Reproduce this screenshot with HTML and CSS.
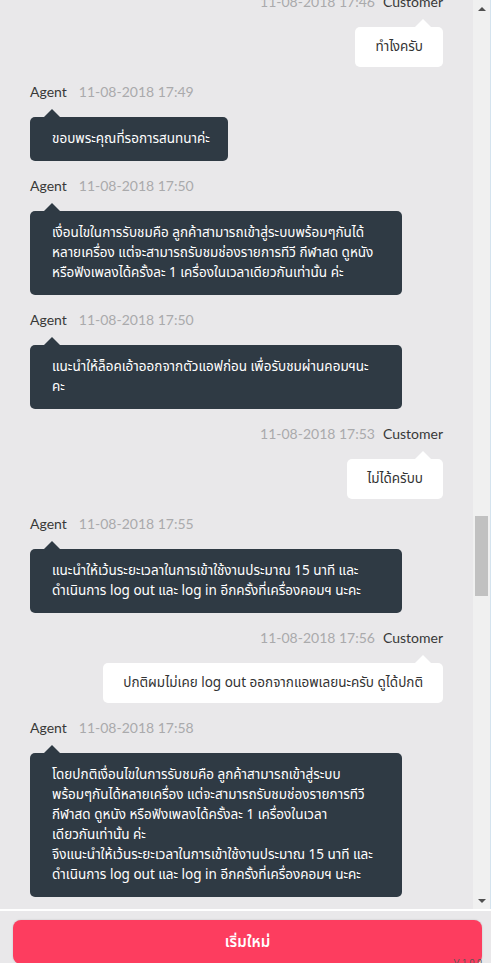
FILE: index.html
```html
<!DOCTYPE html>
<html lang="th">
<head>
<meta charset="utf-8">
<title>Chat</title>
<link rel="stylesheet" href="styles.css">
</head>
<body>
<div class="app">
  <div class="chat-row">
    <div class="messages">
      <div class="list">
        <div class="msg customer">
          <div class="meta"><span class="time">11-08-2018 17:46</span><span class="who">Customer</span></div>
          <div class="bubble">ทำไงครับ</div>
        </div>
        <div class="msg agent">
          <div class="meta"><span class="who">Agent</span><span class="time">11-08-2018 17:49</span></div>
          <div class="bubble">ขอบพระคุณที่รอการสนทนาค่ะ</div>
        </div>
        <div class="msg agent">
          <div class="meta"><span class="who">Agent</span><span class="time">11-08-2018 17:50</span></div>
          <div class="bubble full">เงื่อนไขในการรับชมคือ ลูกค้าสามารถเข้าสู่ระบบพร้อมๆกันได้<br>หลายเครื่อง แต่จะสามารถรับชมช่องรายการทีวี กีฬาสด ดูหนัง<br>หรือฟังเพลงได้ครั้งละ 1 เครื่องในเวลาเดียวกันเท่านั้น ค่ะ</div>
        </div>
        <div class="msg agent">
          <div class="meta"><span class="who">Agent</span><span class="time">11-08-2018 17:50</span></div>
          <div class="bubble full">แนะนำให้ล็อคเอ้าออกจากตัวแอฟก่อน เพื่อรับชมผ่านคอมฯนะ<br>คะ</div>
        </div>
        <div class="msg customer">
          <div class="meta"><span class="time">11-08-2018 17:53</span><span class="who">Customer</span></div>
          <div class="bubble">ไม่ได้ครับบ</div>
        </div>
        <div class="msg agent">
          <div class="meta"><span class="who">Agent</span><span class="time">11-08-2018 17:55</span></div>
          <div class="bubble full">แนะนำให้เว้นระยะเวลาในการเข้าใช้งานประมาณ 15 นาที และ<br>ดำเนินการ log out และ log in อีกครั้งที่เครื่องคอมฯ นะคะ</div>
        </div>
        <div class="msg customer">
          <div class="meta"><span class="time">11-08-2018 17:56</span><span class="who">Customer</span></div>
          <div class="bubble">ปกติผมไม่เคย log out ออกจากแอพเลยนะครับ ดูได้ปกติ</div>
        </div>
        <div class="msg agent">
          <div class="meta"><span class="who">Agent</span><span class="time">11-08-2018 17:58</span></div>
          <div class="bubble full">โดยปกติเงื่อนไขในการรับชมคือ ลูกค้าสามารถเข้าสู่ระบบ<br>พร้อมๆกันได้หลายเครื่อง แต่จะสามารถรับชมช่องรายการทีวี<br>กีฬาสด ดูหนัง หรือฟังเพลงได้ครั้งละ 1 เครื่องในเวลา<br>เดียวกันเท่านั้น ค่ะ<br>จึงแนะนำให้เว้นระยะเวลาในการเข้าใช้งานประมาณ 15 นาที และ<br>ดำเนินการ log out และ log in อีกครั้งที่เครื่องคอมฯ นะคะ</div>
        </div>
      </div>
    </div>
    <div class="scrollbar">
      <div class="arrow up"></div>
      <div class="track"><div class="thumb"></div></div>
      <div class="arrow down"></div>
    </div>
  </div>
  <div class="footer">
    <button class="restart">เริ่มใหม่</button>
    <span class="version">V 1.0.0</span>
  </div>
</div>
</body>
</html>
```
FILE: styles.css
```css
* { box-sizing: border-box; }
html, body { margin: 0; padding: 0; }
body {
  background: #e9e8ea;
  font-family: "Lato", "Noto Sans Thai", "Noto Sans", sans-serif;
  overflow: hidden;
}
.app {
  width: 491px;
  height: 963px;
  display: flex;
  flex-direction: column;
}
.chat-row {
  display: flex;
  height: 909px;
  flex: none;
}
.messages {
  flex: 1;
  overflow: hidden;
  padding: 0 30px;
  background: #e9e8ea;
}
.list {
  display: flex;
  flex-direction: column;
  gap: 16px;
  margin-top: -7px;
}
.msg {
  display: flex;
  flex-direction: column;
  gap: 16px;
  align-items: flex-start;
}
.msg.customer { align-items: flex-end; }
.meta {
  font-size: 14px;
  line-height: 18px;
  height: 18px;
  white-space: nowrap;
}
.who { color: #383838; }
.time { color: #aaaaac; }
.agent .time { margin-left: 12px; }
.customer .time { margin-right: 8px; }
.bubble {
  position: relative;
  max-width: 372px;
  border-radius: 5px;
  font-family: "Noto Sans Thai", "Liberation Sans", sans-serif;
  font-size: 13.5px;
  line-height: 20px;
}
.bubble.full { width: 372px; }
.agent .bubble {
  background: #2f3a44;
  color: #ffffff;
  padding: 12px 18px 12px 22px;
}
.customer .bubble {
  background: #ffffff;
  color: #333333;
  padding: 10px 20px;
}
.bubble::before {
  content: "";
  position: absolute;
  top: -8px;
  width: 0;
  height: 0;
  border-left: 8px solid transparent;
  border-right: 8px solid transparent;
}
.agent .bubble::before {
  left: 14px;
  border-bottom: 8px solid #2f3a44;
}
.customer .bubble::before {
  right: 12px;
  border-bottom: 8px solid #ffffff;
}
.scrollbar {
  width: 18px;
  flex: none;
  display: flex;
  flex-direction: column;
  background: #f0f0f0;
  border-right: 1px solid #d4e3ee;
}
.arrow {
  height: 17px;
  flex: none;
  display: flex;
  align-items: center;
  justify-content: center;
}
.arrow::before {
  content: "";
  width: 0;
  height: 0;
  border-left: 4px solid transparent;
  border-right: 4px solid transparent;
}
.arrow.up::before { border-bottom: 4px solid #505050; }
.arrow.down::before { border-top: 4px solid #505050; }
.track {
  flex: 1;
  padding: 0 2px;
}
.thumb {
  margin-top: 499px;
  height: 80px;
  background: #c1c1c1;
}
.footer {
  position: relative;
  flex: 1;
  border-top: 2px solid #ffffff;
  padding: 9px 9px 0 13px;
  background: #e9e8ea;
}
.restart {
  display: block;
  width: 100%;
  height: 44px;
  border: none;
  border-radius: 8px;
  background: #fd3d5f;
  box-shadow: 0 0 2px rgba(0, 0, 0, 0.18);
  color: #ffffff;
  font-family: "Noto Sans Thai", "Liberation Sans", sans-serif;
  font-weight: 600;
  font-size: 15px;
  padding: 0;
}
.version {
  position: absolute;
  right: 9px;
  top: 46px;
  font-family: "Liberation Sans", sans-serif;
  font-size: 9px;
  color: #555555;
}
```
